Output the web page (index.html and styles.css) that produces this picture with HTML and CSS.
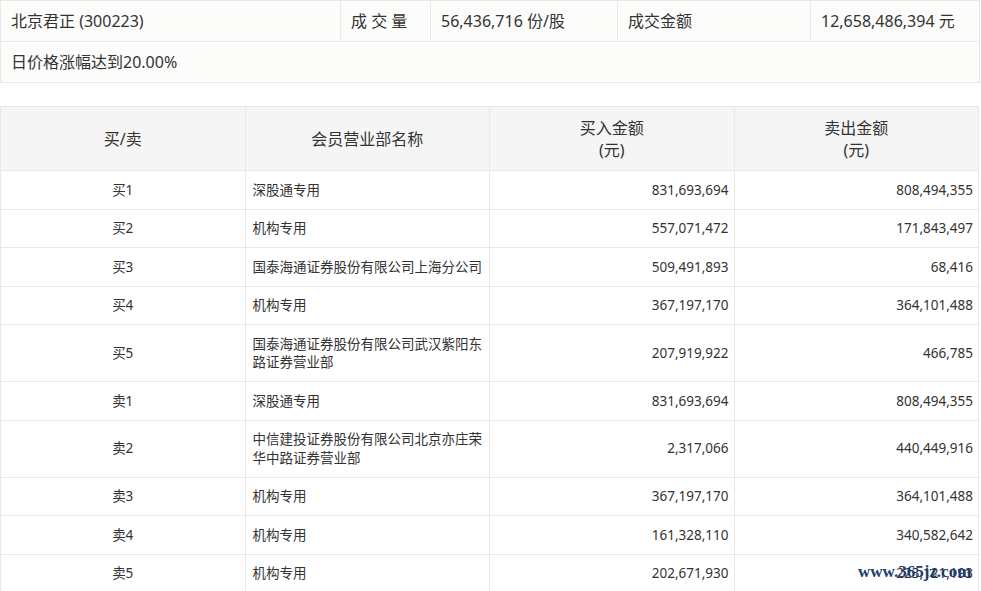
FILE: index.html
```html
<!DOCTYPE html>
<html lang="zh-CN">
<head>
<meta charset="utf-8">
<title>北京君正 龙虎榜</title>
<link rel="stylesheet" href="styles.css">
</head>
<body>
<div class="page">
  <table class="info">
    <colgroup>
      <col class="c1"><col class="c2"><col class="c3"><col class="c4"><col class="c5">
    </colgroup>
    <tr>
      <td>北京君正 (300223)</td>
      <td>成 交 量</td>
      <td>56,436,716 份/股</td>
      <td>成交金额</td>
      <td>12,658,486,394 元</td>
    </tr>
    <tr>
      <td colspan="5">日价格涨幅达到20.00%</td>
    </tr>
  </table>

  <table class="list">
    <thead>
      <tr>
        <th>买/卖</th>
        <th>会员营业部名称</th>
        <th>买入金额<br>(元)</th>
        <th>卖出金额<br>(元)</th>
      </tr>
    </thead>
    <tbody>
      <tr><td class="side">买1</td><td class="name">深股通专用</td><td class="num">831,693,694</td><td class="num">808,494,355</td></tr>
      <tr><td class="side">买2</td><td class="name">机构专用</td><td class="num">557,071,472</td><td class="num">171,843,497</td></tr>
      <tr><td class="side">买3</td><td class="name">国泰海通证券股份有限公司上海分公司</td><td class="num">509,491,893</td><td class="num">68,416</td></tr>
      <tr><td class="side">买4</td><td class="name">机构专用</td><td class="num">367,197,170</td><td class="num">364,101,488</td></tr>
      <tr><td class="side">买5</td><td class="name">国泰海通证券股份有限公司武汉紫阳东路证券营业部</td><td class="num">207,919,922</td><td class="num">466,785</td></tr>
      <tr><td class="side">卖1</td><td class="name">深股通专用</td><td class="num">831,693,694</td><td class="num">808,494,355</td></tr>
      <tr><td class="side">卖2</td><td class="name">中信建投证券股份有限公司北京亦庄荣华中路证券营业部</td><td class="num">2,317,066</td><td class="num">440,449,916</td></tr>
      <tr><td class="side">卖3</td><td class="name">机构专用</td><td class="num">367,197,170</td><td class="num">364,101,488</td></tr>
      <tr><td class="side">卖4</td><td class="name">机构专用</td><td class="num">161,328,110</td><td class="num">340,582,642</td></tr>
      <tr><td class="side">卖5</td><td class="name">机构专用</td><td class="num">202,671,930</td><td class="num">223,121,193</td></tr>
    </tbody>
  </table>

  <div class="watermark">www.365jz.com</div>
</div>
</body>
</html>
```

FILE: styles.css
```css
html, body {
  margin: 0;
  padding: 0;
  background: #ffffff;
}

body {
  font-family: "Noto Sans", "Noto Sans CJK SC", sans-serif;
  color: #333333;
  overflow: hidden;
}

.page {
  position: relative;
  width: 979px;
}

table {
  border-collapse: collapse;
  table-layout: fixed;
  width: 979px;
}

td, th {
  border: 1px solid #e8e8e8;
}

/* summary table */
.info {
  background: #fcfcfb;
  font-size: 16px;
  line-height: 21px;
}

.info td {
  padding: 10px 10px 9px;
  white-space: nowrap;
}

.info .c1 { width: 340px; }
.info .c2 { width: 90px; }
.info .c3 { width: 187px; }
.info .c4 { width: 193px; }
.info .c5 { width: 169px; }

/* list table */
.list {
  margin-top: 23px;
}

.list th {
  background: #f5f5f5;
  font-weight: normal;
  font-size: 16px;
  line-height: 22px;
  padding: 9.5px 6px;
  text-align: center;
  width: 25%;
}

.list td {
  font-size: 13.5px;
  line-height: 18.5px;
  padding: 9.5px 6px;
  background: #ffffff;
}

.list .side {
  text-align: center;
}

.list .name {
  padding-left: 7px;
  padding-right: 6px;
}

.list .num {
  text-align: right;
  padding-right: 5px;
}

.watermark {
  position: absolute;
  left: 858px;
  top: 562px;
  font-family: "Liberation Serif", "DejaVu Serif", serif;
  font-weight: bold;
  font-size: 17px;
  line-height: 20px;
  color: #1c3b70;
  white-space: nowrap;
}
```
